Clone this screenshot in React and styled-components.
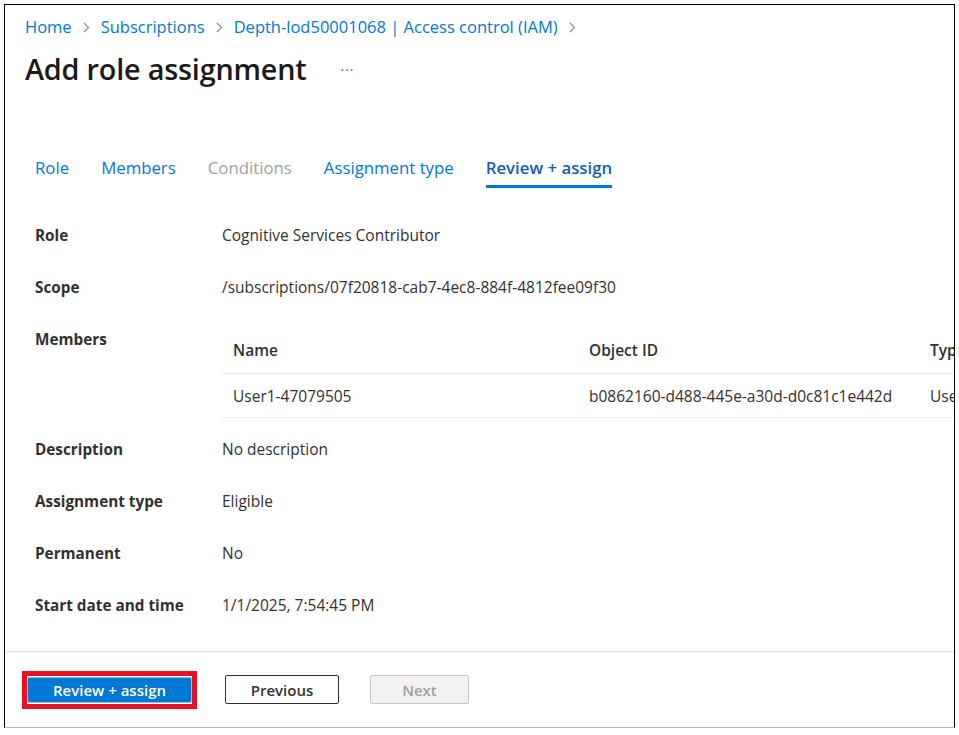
import React from 'react';
import styled, {createGlobalStyle} from 'styled-components';

const GlobalStyle = createGlobalStyle`
  html, body { margin: 0; padding: 0; background: #fff; }
  body {
    font-family: "Segoe UI", "Open Sans", "Noto Sans", sans-serif;
    color: #323130;
    -webkit-font-smoothing: antialiased;
  }
`;

const Frame = styled.div`
  margin: 4px 0 0 4px;
  width: 951px;
  height: 724px;
  box-sizing: border-box;
  border: 1px solid #000;
  border-bottom-color: #b8b8b8;
  display: flex;
  flex-direction: column;
  overflow: hidden;
  background: #fff;
`;

const Main = styled.div`
  flex: 1;
  padding: 12px 0 0 20px;
`;

const Crumbs = styled.nav`
  display: flex;
  align-items: center;
  gap: 11px;
  height: 20px;
  font-size: 16.5px;
  line-height: 20px;
`;

const Crumb = styled.a`
  color: #0078d4;
  text-decoration: none;
  white-space: nowrap;
`;

const TitleRow = styled.div`
  display: flex;
  align-items: center;
  margin-top: 14px;
  height: 36px;
`;

const Title = styled.h1`
  margin: 0;
  font-size: 28.8px;
  line-height: 36px;
  font-weight: 600;
  color: #1b1a19;
  letter-spacing: -0.2px;
`;

const More = styled.span`
  margin-left: 34px;
  font-size: 14px;
  color: #605e5c;
  letter-spacing: 1px;
`;

const Tabs = styled.div`
  display: flex;
  gap: 32px;
  margin: 71px 0 0 10px;
`;

const Tab = styled.div`
  font-size: 16.8px;
  line-height: 20px;
  padding-bottom: 7px;
  border-bottom: 3px solid ${p => (p.$active ? '#0078d4' : 'transparent')};
  color: ${p => (p.$disabled ? '#a19f9d' : p.$active ? '#0f5fb0' : '#0078d4')};
  font-weight: ${p => (p.$active ? 600 : 400)};
  white-space: nowrap;
`;

const Details = styled.div`
  margin: 21px 0 0 10px;
`;

const Row = styled.div`
  display: flex;
  align-items: flex-start;
  padding: ${p => (p.$table ? '16px 0 5px' : '16px 0')};
`;

const Label = styled.div`
  width: 187px;
  flex: none;
  font-size: 15.3px;
  line-height: 20px;
  font-weight: 700;
  color: #323130;
`;

const Value = styled.div`
  font-size: 15.5px;
  line-height: 20px;
  color: #323130;
  white-space: nowrap;
`;

const Table = styled.div`
  flex: none;
  width: 900px;
`;

const TRow = styled.div`
  display: grid;
  grid-template-columns: 356px 341px 1fr;
  height: ${p => (p.$head ? '44px' : '43px')};
  align-items: ${p => (p.$head ? 'start' : 'center')};
  border-bottom: 1px solid #edebe9;
`;

const Cell = styled.div`
  padding-left: 11px;
  font-size: 15.5px;
  line-height: 20px;
  white-space: nowrap;
  font-weight: ${p => (p.$head ? 600 : 400)};
  padding-top: ${p => (p.$head ? '11px' : '0')};
  color: #323130;
`;

const Footer = styled.div`
  flex: none;
  height: 76px;
  box-sizing: border-box;
  border-top: 1px solid #e1dfdd;
  display: flex;
  align-items: center;
  padding: 0 0 0 17px;
`;

const Highlight = styled.div`
  border: 5px solid #e81123;
  padding: 1px 0;
  margin-right: 28px;
  display: flex;
`;

const Button = styled.button`
  font-family: inherit;
  font-size: 15px;
  font-weight: 600;
  border-radius: 2px;
  box-sizing: border-box;
  cursor: pointer;
  padding: 0;
  width: ${p => p.$w}px;
  height: ${p => p.$h || 29}px;
  margin-right: ${p => p.$mr || 0}px;
  background: ${p => (p.$primary ? '#0078d4' : p.$disabled ? '#f3f2f1' : '#fff')};
  color: ${p => (p.$primary ? '#fff' : p.$disabled ? '#a19f9d' : '#323130')};
  border: 1px solid ${p => (p.$primary ? '#8cc4f0' : p.$disabled ? '#c8c6c4' : '#323130')};
`;

function Chevron() {
  return (
    <svg width="7" height="11" viewBox="0 0 7 11" fill="none">
      <path d="M1 1l4.5 4.5L1 10" stroke="#8a8886" strokeWidth="1.1" />
    </svg>
  );
}

const rows = [
  ['Role', 'Cognitive Services Contributor'],
  ['Scope', '/subscriptions/07f20818-cab7-4ec8-884f-4812fee09f30'],
];

const rowsAfter = [
  ['Description', 'No description'],
  ['Assignment type', 'Eligible'],
  ['Permanent', 'No'],
  ['Start date and time', '1/1/2025, 7:54:45 PM'],
];

export default function App() {
  return (
    <>
      <GlobalStyle />
      <Frame>
        <Main>
          <Crumbs>
            <Crumb>Home</Crumb>
            <Chevron />
            <Crumb>Subscriptions</Crumb>
            <Chevron />
            <Crumb>Depth-lod50001068 | Access control (IAM)</Crumb>
            <Chevron />
          </Crumbs>
          <TitleRow>
            <Title>Add role assignment</Title>
            <More>···</More>
          </TitleRow>
          <Tabs>
            <Tab>Role</Tab>
            <Tab>Members</Tab>
            <Tab $disabled>Conditions</Tab>
            <Tab>Assignment type</Tab>
            <Tab $active>Review + assign</Tab>
          </Tabs>
          <Details>
            {rows.map(([k, v]) => (
              <Row key={k}>
                <Label>{k}</Label>
                <Value>{v}</Value>
              </Row>
            ))}
            <Row $table>
              <Label>Members</Label>
              <Table>
                <TRow $head>
                  <Cell $head>Name</Cell>
                  <Cell $head>Object ID</Cell>
                  <Cell $head>Type</Cell>
                </TRow>
                <TRow>
                  <Cell>User1-47079505</Cell>
                  <Cell>b0862160-d488-445e-a30d-d0c81c1e442d</Cell>
                  <Cell>User</Cell>
                </TRow>
              </Table>
            </Row>
            {rowsAfter.map(([k, v]) => (
              <Row key={k}>
                <Label>{k}</Label>
                <Value>{v}</Value>
              </Row>
            ))}
          </Details>
        </Main>
        <Footer>
          <Highlight>
            <Button $primary $w={165} $h={26}>Review + assign</Button>
          </Highlight>
          <Button $w={114} $mr={31}>Previous</Button>
          <Button $disabled $w={99}>Next</Button>
        </Footer>
      </Frame>
    </>
  );
}
